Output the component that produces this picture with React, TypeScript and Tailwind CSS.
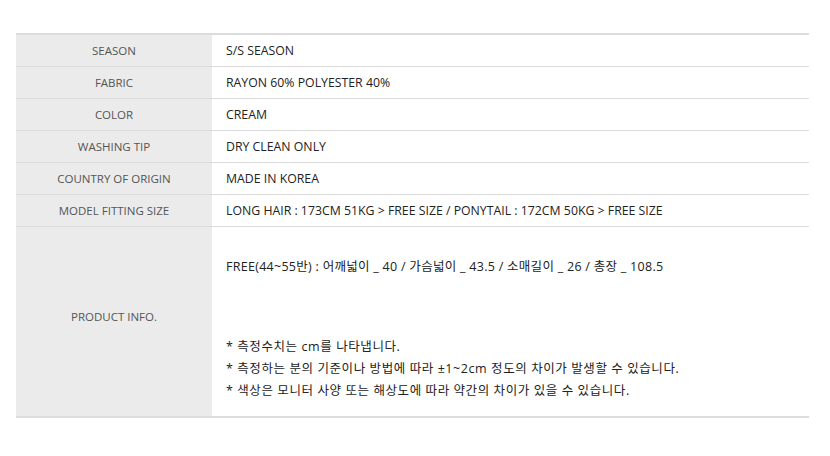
import React from "react";

const rows: [string, string][] = [
  ["SEASON", "S/S SEASON"],
  ["FABRIC", "RAYON 60% POLYESTER 40%"],
  ["COLOR", "CREAM"],
  ["WASHING TIP", "DRY CLEAN ONLY"],
  ["COUNTRY OF ORIGIN", "MADE IN KOREA"],
  ["MODEL FITTING SIZE", "LONG HAIR : 173CM 51KG > FREE SIZE / PONYTAIL : 172CM 50KG > FREE SIZE"],
];

const font = { fontFamily: '"Open Sans", "Noto Sans CJK KR", sans-serif' };

export default function App() {
  return (
    <div className="w-[830px] h-[456px] bg-white pt-[33px] pl-[16px]" style={font}>
      <div className="w-[793px] border-t-2 border-b-2 border-[#dcdcdc]">
        {rows.map(([k, v]) => (
          <div key={k} className="flex h-[32px] border-b border-[#dcdcdc]">
            <div className="w-[196px] bg-[#ebebeb] flex items-center justify-center text-[11.5px] text-[#555]">{k}</div>
            <div className="flex-1 flex items-center pl-[14px] pt-[1px] text-[12.3px] text-[#222]">{v}</div>
          </div>
        ))}
        <div className="flex h-[189px]">
          <div className="w-[196px] bg-[#ebebeb] flex items-center justify-center text-[11.5px] text-[#555] pb-[10px]">PRODUCT INFO.</div>
          <div className="flex-1 pl-[14px] pt-[29px] text-[12.5px] text-[#222] leading-[22px]">
            <div className="tracking-[0.28px]">FREE(44~55반) : 어깨넓이 _ 40 / 가슴넓이 _ 43.5 / 소매길이 _ 26 / 총장 _ 108.5</div>
            <div className="mt-[58px] tracking-[0.58px]">* 측정수치는 cm를 나타냅니다.</div>
            <div className="tracking-[0.58px]">* 측정하는 분의 기준이나 방법에 따라 ±1~2cm 정도의 차이가 발생할 수 있습니다.</div>
            <div className="tracking-[0.58px]">* 색상은 모니터 사양 또는 해상도에 따라 약간의 차이가 있을 수 있습니다.</div>
          </div>
        </div>
      </div>
    </div>
  );
}
